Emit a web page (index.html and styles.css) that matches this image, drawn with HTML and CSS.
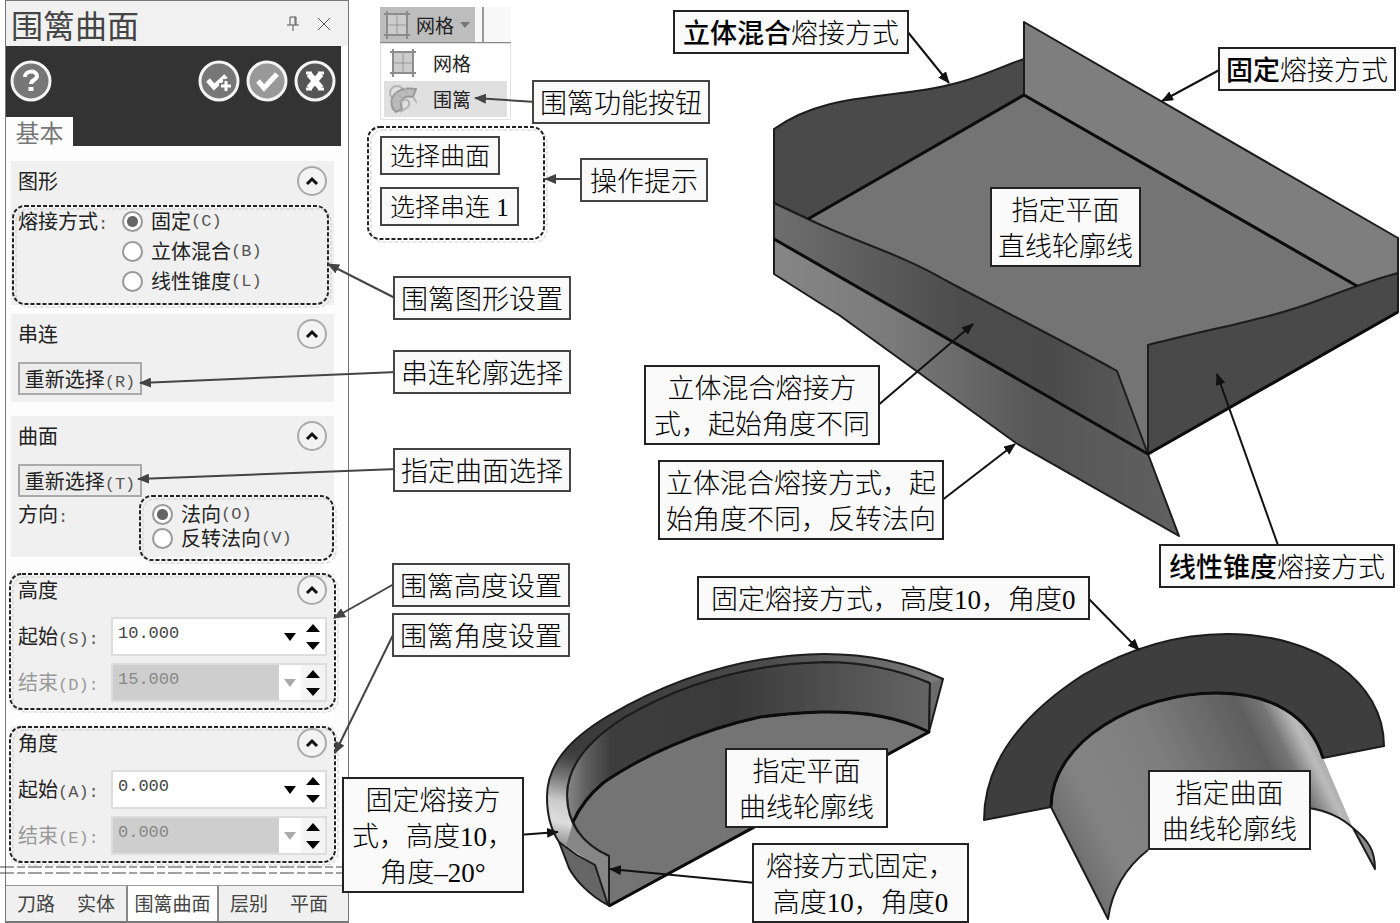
FILE: index.html
```html
<!DOCTYPE html>
<html lang="zh-CN">
<head>
	<meta charset="utf-8">
	<title>围篱曲面</title>
	<link rel="stylesheet" href="styles.css">
</head>
<body>
<div class="sheet">

	<form class="panel">
		<header class="panel-title">
			<h1>围篱曲面</h1>
			<button type="button" class="plain" aria-label="固定面板">
				<svg width="14" height="16" viewBox="0 0 14 16"><path d="M4 1h6M4 1v8M9 1v8M10 1v8M1 9h12M7 9v6"/></svg>
			</button>
			<button type="button" class="plain" aria-label="关闭">
				<svg width="16" height="16" viewBox="0 0 16 16"><path d="M2 2l12 12M14 2L2 14"/></svg>
			</button>
		</header>

		<div class="toolbar">
			<div class="actions">
				<button type="button" class="round help" aria-label="帮助">
					<svg width="42" height="42" viewBox="0 0 42 42"><circle cx="21" cy="21" r="19"/><path d="M15 17c0-7 12-7 12-1 0 4-6 4-6 8" stroke-width="4"/><path d="M21 27v4" stroke-width="5"/></svg>
				</button>
				<button type="button" class="round" aria-label="确定并创建新操作">
					<svg width="42" height="42" viewBox="0 0 42 42"><circle cx="21" cy="21" r="19"/><path d="M10 20l6 7 12-11" stroke-width="5"/><path class="gap" d="M28 19v14M21 26h14" stroke-width="6"/><path d="M28 21v10M23 26h10" stroke-width="3"/></svg>
				</button>
				<button type="button" class="round ok" aria-label="确定">
					<svg width="42" height="42" viewBox="0 0 42 42"><circle cx="21" cy="21" r="19"/><path d="M12 21l6 7 13-14" stroke-width="5"/></svg>
				</button>
				<button type="button" class="round cancel" aria-label="取消">
					<svg width="42" height="42" viewBox="0 0 42 42"><circle cx="21" cy="21" r="19"/><path d="M15 14l12 14M27 14L15 28" stroke-width="6"/><path d="M12 13h6M24 13h6M12 29h6M24 29h6" stroke-width="3"/></svg>
				</button>
			</div>
			<a class="page-tab" href="#basic">基本</a>
		</div>

		<div class="groups" id="basic">
			<section class="group shape">
				<header><h2>图形</h2><button type="button" class="fold" aria-label="收起图形"><svg width="30" height="30" viewBox="0 0 30 30"><circle cx="15" cy="15" r="14"/><path d="M10 18l5-5 5 5"/></svg></button></header>
				<div class="choice">
					<span class="caption">熔接方式<i>:</i></span>
					<div class="options">
						<label><input type="radio" name="blend" checked>固定<i>(C)</i></label>
						<label><input type="radio" name="blend">立体混合<i>(B)</i></label>
						<label><input type="radio" name="blend">线性锥度<i>(L)</i></label>
					</div>
				</div>
			</section>

			<section class="group chain">
				<header><h2>串连</h2><button type="button" class="fold" aria-label="收起串连"><svg width="30" height="30" viewBox="0 0 30 30"><circle cx="15" cy="15" r="14"/><path d="M10 18l5-5 5 5"/></svg></button></header>
				<button type="button" class="reselect">重新选择<i>(R)</i></button>
			</section>

			<section class="group surface">
				<header><h2>曲面</h2><button type="button" class="fold" aria-label="收起曲面"><svg width="30" height="30" viewBox="0 0 30 30"><circle cx="15" cy="15" r="14"/><path d="M10 18l5-5 5 5"/></svg></button></header>
				<button type="button" class="reselect">重新选择<i>(T)</i></button>
				<div class="choice">
					<span class="caption">方向<i>:</i></span>
					<div class="options">
						<label><input type="radio" name="direction" checked>法向<i>(O)</i></label>
						<label><input type="radio" name="direction">反转法向<i>(V)</i></label>
					</div>
				</div>
			</section>

			<section class="group values">
				<header><h2>高度</h2><button type="button" class="fold" aria-label="收起高度"><svg width="30" height="30" viewBox="0 0 30 30"><circle cx="15" cy="15" r="14"/><path d="M10 18l5-5 5 5"/></svg></button></header>
				<div class="field">
					<label for="height-start">起始<i>(S):</i></label>
					<div class="spin">
						<input type="text" id="height-start" value="10.000">
						<button type="button" class="drop" aria-label="列表"><svg width="12" height="8" viewBox="0 0 12 8"><path d="M0 0h12L6 8z"/></svg></button>
						<div class="steps">
							<button type="button" aria-label="增加"><svg width="14" height="8" viewBox="0 0 14 8"><path d="M0 8L7 0l7 8z"/></svg></button>
							<button type="button" aria-label="减少"><svg width="14" height="8" viewBox="0 0 14 8"><path d="M0 0l7 8 7-8z"/></svg></button>
						</div>
					</div>
				</div>
				<div class="field off">
					<label for="height-end">结束<i>(D):</i></label>
					<div class="spin">
						<input type="text" id="height-end" value="15.000" disabled>
						<button type="button" class="drop" aria-label="列表" disabled><svg width="12" height="8" viewBox="0 0 12 8"><path d="M0 0h12L6 8z"/></svg></button>
						<div class="steps">
							<button type="button" aria-label="增加"><svg width="14" height="8" viewBox="0 0 14 8"><path d="M0 8L7 0l7 8z"/></svg></button>
							<button type="button" aria-label="减少"><svg width="14" height="8" viewBox="0 0 14 8"><path d="M0 0l7 8 7-8z"/></svg></button>
						</div>
					</div>
				</div>
			</section>

			<section class="group values">
				<header><h2>角度</h2><button type="button" class="fold" aria-label="收起角度"><svg width="30" height="30" viewBox="0 0 30 30"><circle cx="15" cy="15" r="14"/><path d="M10 18l5-5 5 5"/></svg></button></header>
				<div class="field">
					<label for="angle-start">起始<i>(A):</i></label>
					<div class="spin">
						<input type="text" id="angle-start" value="0.000">
						<button type="button" class="drop" aria-label="列表"><svg width="12" height="8" viewBox="0 0 12 8"><path d="M0 0h12L6 8z"/></svg></button>
						<div class="steps">
							<button type="button" aria-label="增加"><svg width="14" height="8" viewBox="0 0 14 8"><path d="M0 8L7 0l7 8z"/></svg></button>
							<button type="button" aria-label="减少"><svg width="14" height="8" viewBox="0 0 14 8"><path d="M0 0l7 8 7-8z"/></svg></button>
						</div>
					</div>
				</div>
				<div class="field off">
					<label for="angle-end">结束<i>(E):</i></label>
					<div class="spin">
						<input type="text" id="angle-end" value="0.000" disabled>
						<button type="button" class="drop" aria-label="列表" disabled><svg width="12" height="8" viewBox="0 0 12 8"><path d="M0 0h12L6 8z"/></svg></button>
						<div class="steps">
							<button type="button" aria-label="增加"><svg width="14" height="8" viewBox="0 0 14 8"><path d="M0 8L7 0l7 8z"/></svg></button>
							<button type="button" aria-label="减少"><svg width="14" height="8" viewBox="0 0 14 8"><path d="M0 0l7 8 7-8z"/></svg></button>
						</div>
					</div>
				</div>
			</section>
		</div>

		<nav class="managers">
			<a href="#toolpaths">刀路</a>
			<a href="#solids">实体</a>
			<a href="#fence" class="current">围篱曲面</a>
			<a href="#levels">层别</a>
			<a href="#planes">平面</a>
		</nav>
	</form>

	<div class="ribbon">
		<div class="ribbon-top">
			<button type="button">
				<svg class="mesh" width="26" height="28" viewBox="0 0 26 28"><path d="M3 3h20v21H3z"/><path d="M3 0v28M23 0v28M0 3h26M0 24h26"/><path class="inner" d="M13 3v21M3 14h20"/></svg>
				网格
				<svg class="caret" width="10" height="6" viewBox="0 0 10 6"><path d="M0 0h10L5 6z"/></svg>
			</button>
		</div>
		<ul>
			<li><a href="#mesh"><svg class="mesh" width="26" height="28" viewBox="0 0 26 28"><path d="M3 3h20v21H3z"/><path d="M3 0v28M23 0v28M0 3h26M0 24h26"/><path class="inner" d="M13 3v21M3 14h20"/></svg>网格</a></li>
			<li class="on"><a href="#fence"><svg class="fence" width="28" height="28" viewBox="0 0 28 28"><circle cx="8" cy="8" r="7"/><path class="band" d="M4 24C-1 12 8 1 27 4l-3 8c-10-2-14 3-11 12l-6 3z"/><path d="M3 16l8 1M7 8l6 5M16 3l2 8M24 12l4 6M12 18c4-7 11-2 7 4l-8 5"/></svg>围篱</a></li>
		</ul>
	</div>

	<svg class="drawing" width="1400" height="923" viewBox="0 0 1400 923">
		<defs>
			<marker id="tip" viewBox="0 0 12 10" refX="11" refY="5" markerWidth="12" markerHeight="10" markerUnits="userSpaceOnUse" orient="auto"><path d="M0 0l12 5-12 5z" fill="#111"/></marker>
			<marker id="tip-grey" viewBox="0 0 12 10" refX="11" refY="5" markerWidth="12" markerHeight="10" markerUnits="userSpaceOnUse" orient="auto"><path d="M0 0l12 5-12 5z" fill="#444"/></marker>
			<linearGradient id="front" gradientUnits="userSpaceOnUse" x1="773" y1="0" x2="1148" y2="0">
				<stop offset="0" stop-color="#6e6e6e"/><stop offset=".5" stop-color="#4c4c4c"/><stop offset=".75" stop-color="#4b4b4b"/><stop offset="1" stop-color="#5c5c5c"/>
			</linearGradient>
			<linearGradient id="under" gradientUnits="userSpaceOnUse" x1="773" y1="0" x2="1180" y2="0">
				<stop offset="0" stop-color="#868686"/><stop offset=".3" stop-color="#7a7a7a"/><stop offset=".65" stop-color="#565656"/><stop offset="1" stop-color="#606060"/>
			</linearGradient>
			<linearGradient id="wall" gradientUnits="userSpaceOnUse" x1="567" y1="0" x2="930" y2="0">
				<stop offset="0" stop-color="#888"/><stop offset=".05" stop-color="#606060"/><stop offset=".12" stop-color="#3e3e3e"/><stop offset=".45" stop-color="#3a3a3a"/><stop offset="1" stop-color="#646464"/>
			</linearGradient>
			<linearGradient id="rim" gradientUnits="userSpaceOnUse" x1="580" y1="745" x2="560" y2="842">
				<stop offset="0" stop-color="#3b3b3b" stop-opacity="0"/><stop offset=".15" stop-color="#444"/><stop offset=".35" stop-color="#777"/><stop offset=".6" stop-color="#ccc"/><stop offset=".8" stop-color="#ddd"/><stop offset="1" stop-color="#999"/>
			</linearGradient>
			<linearGradient id="rim-top" gradientUnits="userSpaceOnUse" x1="600" y1="0" x2="943" y2="0">
				<stop offset="0" stop-color="#3b3b3b"/><stop offset=".5" stop-color="#4c4c4c"/><stop offset="1" stop-color="#7c7c7c"/>
			</linearGradient>
			<linearGradient id="tube" gradientUnits="userSpaceOnUse" x1="1051" y1="807" x2="1289" y2="688">
				<stop offset="0" stop-color="#6f6f6f"/><stop offset=".15" stop-color="#848484"/><stop offset=".45" stop-color="#7e7e7e"/><stop offset=".8" stop-color="#5e5e5e"/><stop offset=".88" stop-color="#757575"/><stop offset=".96" stop-color="#bbb"/><stop offset="1" stop-color="#aaa"/>
			</linearGradient>
		</defs>

		<!-- box with straight contours -->
		<g class="solid">
			<path fill="#747474" d="M808 219L1024 95l333 191v14l-209 60v94L900 270z"/>
			<path fill="#7e7e7e" d="M1024 22l374 216v37l-41 11L1024 95z"/>
			<path fill="#4a4a4a" d="M774 129c56-40 124-28 190-48 24-7 44-17 60-22v36L808 219l-34-16z"/>
			<path fill="url(#under)" d="M774 239v35l41 26 24 15 177 128 163 93-31-82z"/>
			<path fill="url(#front)" d="M774 203l34 16c45 22 95 36 137 61 60 32 120 62 172 91l31 83-374-215z"/>
			<path fill="#494949" d="M1148 345c70-18 125-27 171-45 30-11 55-21 79-27v39l-250 142z"/>
			<path class="heavy" d="M808 219L1024 95l333 191M774 239l374 215 250-142"/>
		</g>

		<!-- half ring on a plane -->
		<g class="solid">
			<path fill="#747474" d="M929 732C897 716 862 711 820 712C795 713 775 715 760 717C700 730 640 757 603 783C590 794 580 806 573 822C581 840 594 850 609 856V906z"/>
			<path fill="url(#wall)" d="M930 683C895 668 862 662 824 662C745 664 680 685 625 717C587 741 567 767 567 795C567 806 569 815 573 822C580 806 590 794 603 783C640 757 700 730 760 717C775 715 795 713 820 712C862 711 897 716 929 732z"/>
			<path fill="#6c6c6c" d="M943 679l-14 53 1-49-12-8z"/>
			<path class="flat" fill="url(#rim-top)" d="M943 679C907 662 866 654 824 654C740 655 670 680 608 716C568 740 547 765 547 797C547 815 551 830 559 842L573 822C569 815 567 806 567 795C567 767 587 741 625 717C680 685 745 664 824 662C862 662 895 668 930 683z"/>
			<path class="flat" fill="url(#rim)" d="M608 716C568 740 547 765 547 797C547 815 551 830 559 842L567 846L573 822C569 815 567 806 567 795C567 767 587 741 625 717z"/>
			<path class="flat" fill="#868686" d="M573 822C581 840 594 850 609 856V906L595 865L566 846z"/>
			<path fill="#666" d="M559 842L577 855L595 865L608 905C590 896 575 880 569 868z"/>
			<path fill="none" d="M943 679C907 662 866 654 824 654C740 655 670 680 608 716C568 740 547 765 547 797C547 815 551 830 559 842M930 683C895 668 862 662 824 662C745 664 680 685 625 717C587 741 567 767 567 795C567 825 583 844 609 856V906"/>
			<path class="heavy" d="M573 822C580 806 590 794 603 783C640 757 700 730 760 717C775 715 795 713 820 712C862 711 897 716 929 732L609 906"/>
		</g>

		<!-- half ring on a curved surface -->
		<g class="solid">
			<path class="flat" fill="url(#tube)" d="M1051 807C1051 741 1137 693 1217 693C1271 693 1310 716 1323 758L1353 828C1342 818 1328 811 1309 808H1200L1148 850C1125 868 1112 890 1108 919z"/>
			<path fill="#888" d="M1353 828C1368 840 1375 850 1375 869z"/>
			<path fill="none" d="M1051 807L1108 919C1112 890 1125 868 1148 850M1309 808C1328 811 1342 818 1353 828"/>
			<path fill="#3e3e3e" d="M984 820c0-60 42-108 99-145 45-26 95-41 144-41 90 0 157 48 157 112l-61 12c-13-42-52-65-106-65-80 0-166 48-166 114z"/>
			<path class="heavy" d="M1051 807c0-66 86-114 166-114 54 0 93 23 106 65"/>
		</g>

		<g class="dashes ghost">
			<rect x="16" y="209" width="315" height="98" rx="12"/>
			<rect x="143" y="499" width="193" height="64" rx="12"/>
			<rect x="13" y="577" width="325" height="135" rx="12"/>
			<rect x="13" y="730" width="325" height="135" rx="12"/>
			<rect x="371" y="130" width="176" height="112" rx="12"/>
		</g>
		<g class="dashes">
			<rect x="13" y="206" width="315" height="98" rx="12"/>
			<rect x="140" y="496" width="193" height="64" rx="12"/>
			<rect x="10" y="574" width="325" height="135" rx="12"/>
			<rect x="10" y="727" width="325" height="135" rx="12"/>
			<rect x="368" y="127" width="176" height="112" rx="12"/>
		</g>
		<path class="break" d="M0 867h342M0 873h342"/>

		<g class="leaders grey">
			<path d="M536 102l-61-4"/>
			<path d="M584 179h-39"/>
			<path d="M395 298l-67-34"/>
			<path d="M397 372l-257 11"/>
			<path d="M397 469l-259 10"/>
			<path d="M394 584l-60 34"/>
			<path d="M394 633l-59 120"/>
		</g>
		<g class="leaders">
			<path d="M907 31l42 52"/>
			<path d="M1223 68l-61 33"/>
			<path d="M876 407l97-83"/>
			<path d="M941 501l74-57"/>
			<path d="M1279 548l-62-174"/>
			<path d="M1087 597l52 53"/>
			<path d="M518 835l40-3"/>
			<path d="M756 883l-146-14"/>
		</g>
	</svg>

	<div class="prompt prompt-surface">选择曲面</div>
	<div class="prompt prompt-chain">选择串连 1</div>

	<div class="note soft note-button">围篱功能按钮</div>
	<div class="note soft mid note-prompt">操作提示</div>
	<div class="note soft note-shape">围篱图形设置</div>
	<div class="note soft note-chain">串连轮廓选择</div>
	<div class="note soft note-surface">指定曲面选择</div>
	<div class="note soft note-height">围篱高度设置</div>
	<div class="note soft note-angle">围篱角度设置</div>

	<div class="note mid note-blend"><b>立体混合</b>熔接方式</div>
	<div class="note note-fixed"><b>固定</b>熔接方式</div>
	<div class="note note-plane">指定平面<br>直线轮廓线</div>
	<div class="note mid note-start">立体混合熔接方<br>式，起始角度不同</div>
	<div class="note note-flip">立体混合熔接方式，起<br>始角度不同，反转法向</div>
	<div class="note mid note-taper"><b>线性锥度</b>熔接方式</div>
	<div class="note wide note-ten">固定熔接方式，高度10，角度0</div>
	<div class="note mid note-minus">固定熔接方<br>式，高度10，<br>角度–20°</div>
	<div class="note wide note-half">指定平面<br>曲线轮廓线</div>
	<div class="note wide note-zero">熔接方式固定，<br>高度10，角度0</div>
	<div class="note wide note-tube">指定曲面<br>曲线轮廓线</div>
</div>
</body>
</html>
```

FILE: styles.css
```css
* { box-sizing: border-box; }
body {
	margin: 0;
	background: #fff;
	color: #222;
	font: 20px/24px "Noto Sans CJK SC", sans-serif;
}
h1, h2, ul { margin: 0; padding: 0; font-weight: normal; }
h1 { flex: 1; font-size: 32px; line-height: 40px; white-space: nowrap; }
h2 { flex: 1; font-size: 20px; line-height: 24px; }
i { font: 17px "Liberation Mono", monospace; color: #555; }
a { color: inherit; text-decoration: none; }
button { margin: 0; padding: 0; border: 0; background: none; color: inherit; font: inherit; }
svg { display: block; }

.sheet { position: relative; display: flex; min-height: 100vh; overflow: hidden; }

/* side panel */
.panel {
	display: flex;
	flex-direction: column;
	flex: 0 0 344px;
	min-width: 0;
	margin-left: 5px;
	border: 1px solid #777;
	border-width: 1px 1px 2px;
	background: #fdfdfd;
}
.panel-title {
	display: flex;
	align-items: center;
	gap: 16px;
	height: 45px;
	padding: 0 16px 0 5px;
	background: #f1f1f1;
	color: #444;
}
.plain svg { fill: none; stroke: #555; stroke-width: 1; }
.toolbar { height: 100px; margin-right: 7px; background: #333; }
.actions { display: flex; gap: 6px; height: 71px; padding: 14px 5px 0 4px; }
.help { margin-right: auto; }
.round { height: 42px; }
.round circle { fill: #777; stroke: #f4f4f4; stroke-width: 3; }
.round path { fill: none; stroke: #fff; }
.round .gap { stroke: #777; }
.ok circle { fill: #999; }
.cancel circle { fill: #555; }
.page-tab {
	display: block;
	width: 67px;
	height: 29px;
	background: #fdfdfd;
	color: #777;
	font-size: 24px;
	line-height: 30px;
	text-align: center;
}

.groups { padding: 15px 14px 0 5px; }
.group { padding: 0 7px; background: #f0f0f0; }
.group header { display: flex; align-items: center; height: 40px; }
.fold circle { fill: #f3f3f3; stroke: #aaa; stroke-width: 2; }
.fold path { fill: none; stroke: #111; stroke-width: 3; }
.choice { display: flex; }
.caption { width: 104px; }
.options label { display: flex; align-items: center; }
.options input {
	appearance: none;
	width: 21px;
	height: 21px;
	margin: 0 8px 0 0;
	border: 2px solid #999;
	border-radius: 50%;
	background: #fff;
}
.options input:checked { background: radial-gradient(circle, #666 5px, #fff 6px); }
.reselect {
	width: 124px;
	height: 33px;
	border: 2px solid #aaa;
	background: #ececec;
	line-height: 28px;
	white-space: nowrap;
}

.shape { height: 144px; margin-bottom: 9px; }
.shape .choice { padding-top: 5px; line-height: 30px; }
.chain { height: 88px; margin-bottom: 14px; }
.chain .reselect, .surface .reselect { margin-top: 8px; }
.surface { height: 141px; margin-bottom: 16px; }
.surface .choice { padding-top: 5px; }
.surface .caption { width: 134px; }

.values { height: 137px; margin-bottom: 16px; }
.values header { height: 34px; margin-bottom: 10px; }
.field { display: flex; align-items: center; height: 39px; margin-bottom: 7px; }
.field > label { width: 93px; }
.spin { display: flex; flex: 1; min-width: 0; height: 39px; border: 2px solid #ddd; background: #fff; }
.spin input {
	flex: 1;
	width: 0;
	min-width: 0;
	padding: 0 0 6px 5px;
	border: 0;
	background: #fff;
	color: #444;
	font: 17px "Liberation Mono", monospace;
}
.spin input:disabled { background: #cecece; color: #888; }
.drop { width: 22px; }
.drop svg, .steps svg { margin: 0 auto; }
.drop:disabled { fill: #aaa; }
.steps { display: flex; flex-direction: column; justify-content: center; gap: 10px; width: 24px; }
.steps button { height: 8px; }
.off .steps { background: #f4f4f4; }
.off, .off i { color: #999; }

.managers {
	display: flex;
	height: 36px;
	margin-top: auto;
	border-top: 1px solid #999;
	background: #f0f0f0;
	color: #444;
	font-size: 19px;
	line-height: 34px;
}
.managers a { width: 60px; text-align: center; }
.managers .current { width: 93px; border: 1px solid #888; border-width: 0 2px; background: #fff; }

/* drop-down menu of the ribbon */
.ribbon { position: absolute; left: 380px; top: 7px; width: 131px; font-size: 19px; }
.ribbon-top { height: 36px; border-bottom: 1px solid #888; background: #f8f8f8; }
.ribbon-top button { display: flex; align-items: center; gap: 6px; width: 95px; height: 35px; padding-left: 4px; background: #bdbdbd; }
.ribbon-top::after { content: ""; display: block; width: 102px; height: 35px; margin-top: -35px; border-right: 2px solid #999; }
.ribbon ul { padding: 1px 3px 2px; border: 1px solid #e0e0e0; list-style: none; }
.ribbon li a { display: flex; align-items: center; gap: 16px; height: 36px; padding-left: 5px; }
.ribbon li svg { width: 28px; }
.ribbon .on { background: #e0e0e0; }
.mesh, .fence { fill: #ccc; stroke: #8c8c8c; stroke-width: 2; }
.mesh .inner { stroke: #999; stroke-width: 1; }
.fence { fill: none; stroke: #b4b4b4; }
.fence .band { fill: #bbb; stroke: #999; }
.caret { fill: #777; }

/* models, dashed frames and leader lines */
.drawing { position: absolute; left: 0; top: 0; pointer-events: none; }
.solid path { stroke: #1c1c1c; stroke-width: 2; stroke-linejoin: round; }
.solid .flat { stroke: none; }
.solid .heavy { fill: none; stroke: #0c0c0c; stroke-width: 3; }
.dashes { fill: none; stroke: #222; stroke-width: 2; stroke-dasharray: 4 2; }
.ghost { stroke: #ccc; stroke-width: 1; }
.break { fill: none; stroke: #444; stroke-width: 1; stroke-dasharray: 14 3 8 3; }
.leaders { fill: none; stroke: #111; stroke-width: 2; }
.leaders path { marker-end: url(#tip); }
.grey { stroke: #444; }
.grey path { marker-end: url(#tip-grey); }

/* callouts */
.note, .prompt {
	position: absolute;
	padding: 4px 6px 0;
	border: 2px solid #222;
	background: #fafafa;
	color: #000;
	font: 300 27px/36px "Liberation Serif", "Noto Sans CJK SC", serif;
	text-align: center;
	white-space: nowrap;
}
.note b { font-weight: 500; }
.soft, .prompt { border-color: #444; }
.mid { padding: 4px 8px 0; }
.wide { padding: 4px 12px 0; }
.prompt { padding: 3px 8px 1px; font-size: 25px; line-height: 31px; }

.prompt-surface { left: 380px; top: 136px; }
.prompt-chain { left: 380px; top: 187px; }
.note-button { left: 532px; top: 80px; }
.note-prompt { left: 580px; top: 158px; }
.note-shape { left: 393px; top: 276px; }
.note-chain { left: 393px; top: 350px; }
.note-surface { left: 393px; top: 448px; }
.note-height { left: 392px; top: 563px; }
.note-angle { left: 392px; top: 613px; }
.note-blend { left: 673px; top: 10px; }
.note-fixed { left: 1218px; top: 47px; }
.note-plane { left: 990px; top: 187px; }
.note-start { left: 644px; top: 365px; }
.note-flip { left: 658px; top: 460px; }
.note-taper { left: 1159px; top: 544px; }
.note-ten { left: 697px; top: 576px; }
.note-minus { left: 342px; top: 777px; }
.note-half { left: 725px; top: 748px; }
.note-zero { left: 752px; top: 843px; }
.note-tube { left: 1148px; top: 770px; }
```
